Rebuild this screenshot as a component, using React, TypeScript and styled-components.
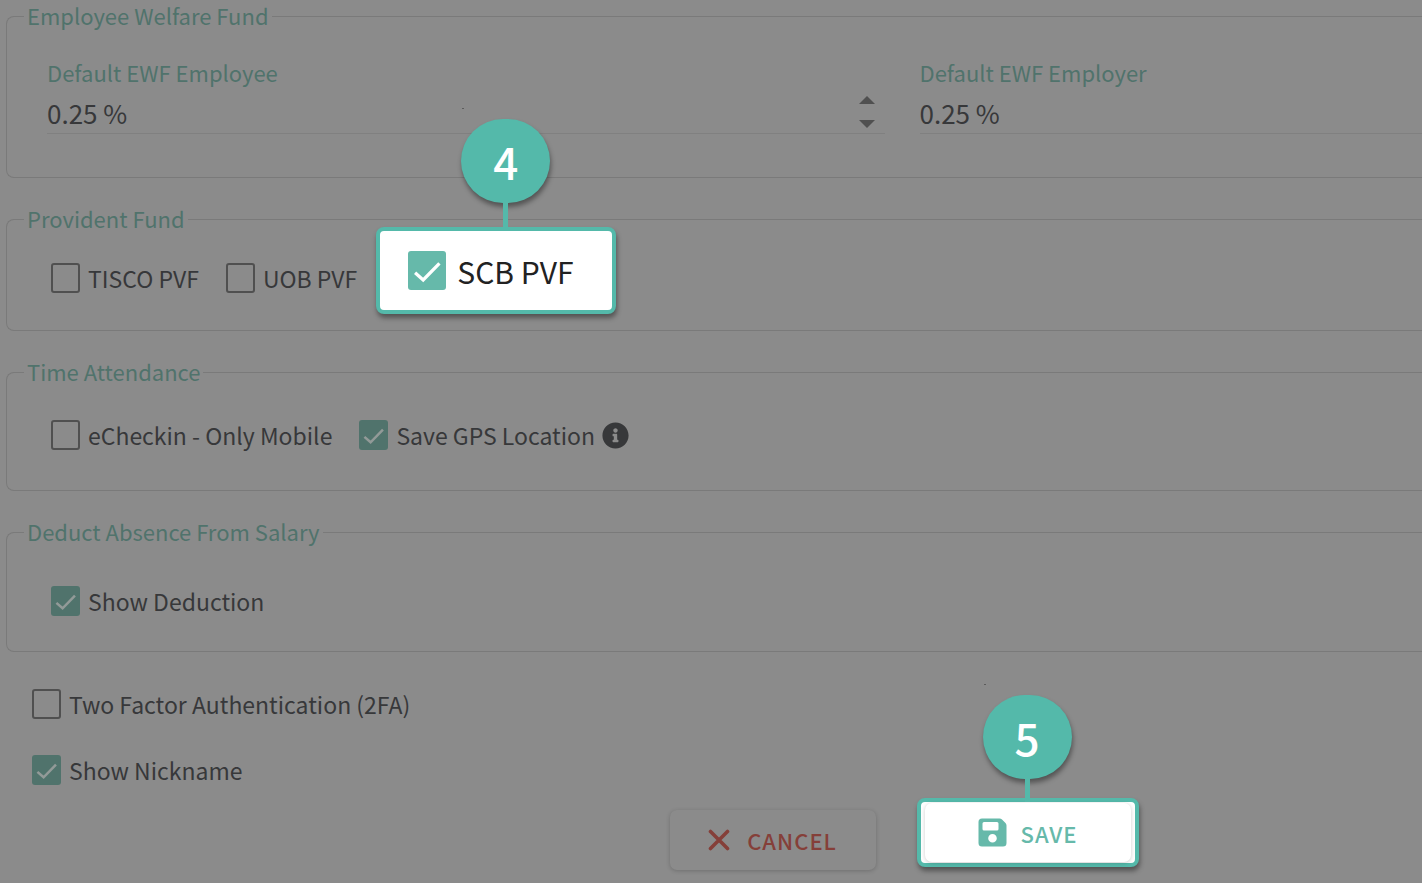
import React from "react";
import styled, { createGlobalStyle } from "styled-components";

const teal = "#54b9aa";
const dimTeal = "#50736c";
const ink = "#37383a";

const GlobalStyle = createGlobalStyle`
  * { box-sizing: border-box; }
  body {
    margin: 0;
    background: #8b8b8b;
    color: ${ink};
    font-family: "Noto Sans CJK SC", "Noto Sans", sans-serif;
    overflow-x: hidden;
  }
`;

const Form = styled.form`
  display: flex;
  flex-direction: column;
  padding: 3px 0 12px 6px;
`;

const Group = styled.fieldset<{ $top: number; $bottom: number }>`
  min-width: 0;
  margin: 0 0 28px;
  padding: ${(p) => p.$top}px 0 ${(p) => p.$bottom}px 40px;
  border: 1px solid #7a7a7a;
  border-right: 0;
  border-radius: 8px 0 0 8px;
`;

const Legend = styled.legend`
  margin-left: -23px;
  padding: 0 3px 2px;
  font-size: 22px;
  line-height: 24px;
  color: ${dimTeal};
`;

const FieldGrid = styled.div`
  display: grid;
  grid-template-columns: 5fr 3fr;
  gap: 35px;
`;

const Field = styled.div`
  display: flex;
  flex-direction: column;
  gap: 12px;
  min-width: 0;
`;

const FieldLabel = styled.label`
  font-size: 22px;
  line-height: 24px;
  color: ${dimTeal};
`;

const FieldControl = styled.div`
  display: flex;
  align-items: center;
  height: 38px;
  padding: 0 10px 5px 0;
  border-bottom: 1px solid #808080;
`;

const FieldInput = styled.input`
  flex: 1;
  min-width: 0;
  height: 32px;
  padding: 0;
  border: 0;
  outline: 0;
  background: transparent;
  color: ${ink};
  font-family: inherit;
  font-size: 26px;
`;

const Stepper = styled.div`
  display: flex;
  flex-direction: column;
  gap: 16px;
`;

const StepButton = styled.button`
  display: flex;
  padding: 0;
  border: 0;
  background: transparent;
  color: #505050;
`;

const CheckRow = styled.div`
  display: flex;
  align-items: flex-start;
  gap: 27px;
  padding-left: 4px;
`;

const LooseChecks = styled.div`
  display: flex;
  flex-direction: column;
  align-items: flex-start;
  gap: 34px;
  padding: 8px 0 0 26px;
`;

const CheckLabel = styled.label<{ $large?: boolean }>`
  display: flex;
  align-items: center;
  gap: ${(p) => (p.$large ? 11 : 8)}px;
  font-size: ${(p) => (p.$large ? 30 : 23)}px;
  line-height: 32px;
  white-space: nowrap;
  color: ${(p) => (p.$large ? "#222222" : ink)};
`;

const CheckBox = styled.span`
  display: grid;
  flex: none;
  > * { grid-area: 1 / 1; }
`;

const CheckInput = styled.input<{ $large?: boolean }>`
  appearance: none;
  width: ${(p) => (p.$large ? 38 : 29)}px;
  height: ${(p) => (p.$large ? 39 : 30)}px;
  margin: 0;
  border: 2px solid #505050;
  border-radius: 3px;
  &:checked {
    border: 0;
    background: ${(p) => (p.$large ? "#66b9aa" : dimTeal)};
  }
`;

const CheckMark = styled.svg`
  place-self: center;
  pointer-events: none;
  visibility: hidden;
  input:checked + & { visibility: visible; }
`;

const Callout = styled.div`
  position: relative;
  display: flex;
  align-items: center;
  border: 4px solid ${teal};
  border-radius: 8px;
  background: #ffffff;
  box-shadow: 1px 4px 5px rgba(0, 0, 0, 0.4);
`;

const CheckCallout = styled(Callout)`
  width: 240px;
  height: 87px;
  margin: -35px 0 -20px -8px;
  padding: 0 0 0 28px;
`;

const SaveCallout = styled(Callout)`
  width: 222px;
  height: 69px;
  padding: 0 4px;
`;

const Badge = styled.span<{ $stem: number; $shift: number }>`
  position: absolute;
  left: 50%;
  bottom: calc(100% + ${(p) => p.$stem}px);
  display: flex;
  align-items: center;
  justify-content: center;
  width: 89px;
  height: 84px;
  margin-left: ${(p) => p.$shift}px;
  border-radius: 43px;
  background: ${teal};
  box-shadow: 1px 4px 5px rgba(0, 0, 0, 0.4);
  color: #ffffff;
  font-size: 44px;
  font-weight: 500;
  line-height: 44px;
  &::before {
    content: "";
    position: absolute;
    top: -11px;
    left: 1px;
    width: 2px;
    height: 1px;
    background: #5c5c5c;
  }
  &::after {
    content: "";
    position: absolute;
    top: 100%;
    left: 42px;
    width: 5px;
    height: ${(p) => p.$stem}px;
    background: ${teal};
  }
`;

const InfoIcon = styled.svg`
  width: 27px;
  height: 27px;
  margin-left: -1px;
`;

const Actions = styled.div`
  display: flex;
  align-items: flex-start;
  justify-content: center;
  gap: 41px;
  padding: 12px 0 0 380px;
`;

const ActionButton = styled.button<{ $save?: boolean }>`
  display: flex;
  align-items: center;
  justify-content: center;
  gap: ${(p) => (p.$save ? 14 : 17)}px;
  flex: ${(p) => (p.$save ? "1" : "0 0 206px")};
  height: ${(p) => (p.$save ? 59 : 60)}px;
  margin-top: ${(p) => (p.$save ? 0 : 12)}px;
  padding: 0;
  border: 0;
  border-radius: 7px;
  background: ${(p) => (p.$save ? "#ffffff" : "#8b8b8b")};
  box-shadow: 0 1px 4px rgba(0, 0, 0, 0.2);
  color: ${(p) => (p.$save ? "#66b9aa" : "#853f39")};
  font-family: inherit;
  font-size: 22px;
  font-weight: 500;
  letter-spacing: 1px;
  svg { flex: none; }
`;

type CheckProps = {
  children: React.ReactNode;
  checked?: boolean;
  large?: boolean;
};

function Check({ children, checked, large }: CheckProps) {
  const size = large ? 38 : 29;
  return (
    <CheckLabel $large={large}>
      <CheckBox>
        <CheckInput type="checkbox" defaultChecked={checked} $large={large} />
        <CheckMark width={size} height={size} viewBox="0 0 30 30" aria-hidden="true">
          <path
            d="M5.6 16.4 L12 22 L24.8 9"
            fill="none"
            stroke={large ? "#ffffff" : "#929a98"}
            strokeWidth="2.6"
          />
        </CheckMark>
      </CheckBox>
      {children}
    </CheckLabel>
  );
}

function RateField({ id, label }: { id: string; label: string }) {
  return (
    <Field>
      <FieldLabel htmlFor={id}>{label}</FieldLabel>
      <FieldControl>
        <FieldInput id={id} type="text" defaultValue="0.25 %" />
        {id === "ewf-employee" && (
          <Stepper>
            <StepButton type="button" aria-label="Increase">
              <svg width="16" height="8" viewBox="0 0 16 8">
                <path d="M0 8 L8 0 L16 8 Z" fill="currentColor" />
              </svg>
            </StepButton>
            <StepButton type="button" aria-label="Decrease">
              <svg width="16" height="8" viewBox="0 0 16 8">
                <path d="M0 0 L8 8 L16 0 Z" fill="currentColor" />
              </svg>
            </StepButton>
          </Stepper>
        )}
      </FieldControl>
    </Field>
  );
}

export default function App() {
  return (
    <>
      <GlobalStyle />
      <Form onSubmit={(e) => e.preventDefault()}>
        <Group $top={31} $bottom={43}>
          <Legend>Employee Welfare Fund</Legend>
          <FieldGrid>
            <RateField id="ewf-employee" label="Default EWF Employee" />
            <RateField id="ewf-employer" label="Default EWF Employer" />
          </FieldGrid>
        </Group>

        <Group $top={30} $bottom={36}>
          <Legend>Provident Fund</Legend>
          <CheckRow>
            <Check>TISCO PVF</Check>
            <Check>UOB PVF</Check>
            <CheckCallout>
              <Badge $stem={28} $shift={-35}>4</Badge>
              <Check checked large>
                SCB PVF
              </Check>
            </CheckCallout>
          </CheckRow>
        </Group>

        <Group $top={34} $bottom={39}>
          <Legend>Time Attendance</Legend>
          <CheckRow>
            <Check>eCheckin - Only Mobile</Check>
            <Check checked>
              Save GPS Location
              <InfoIcon viewBox="0 0 512 512" aria-hidden="true">
                <path
                  fill={ink}
                  d="M256 8C119.043 8 8 119.083 8 256c0 136.997 111.043 248 248 248s248-111.003 248-248C504 119.083 392.957 8 256 8zm0 110c23.196 0 42 18.804 42 42s-18.804 42-42 42-42-18.804-42-42 18.804-42 42-42zm56 254c0 6.627-5.373 12-12 12h-88c-6.627 0-12-5.373-12-12v-24c0-6.627 5.373-12 12-12h12v-64h-12c-6.627 0-12-5.373-12-12v-24c0-6.627 5.373-12 12-12h64c6.627 0 12 5.373 12 12v100h12c6.627 0 12 5.373 12 12v24z"
                />
              </InfoIcon>
            </Check>
          </CheckRow>
        </Group>

        <Group $top={40} $bottom={34}>
          <Legend>Deduct Absence From Salary</Legend>
          <CheckRow>
            <Check checked>Show Deduction</Check>
          </CheckRow>
        </Group>

        <LooseChecks>
          <Check>Two Factor Authentication (2FA)</Check>
          <Check checked>Show Nickname</Check>
        </LooseChecks>

        <Actions>
          <ActionButton type="button">
            <svg width="22" height="22" viewBox="0 0 22 22" aria-hidden="true">
              <path
                d="M2.5 2.5 L19.5 19.5 M19.5 2.5 L2.5 19.5"
                stroke="currentColor"
                strokeWidth="3.6"
                strokeLinecap="round"
              />
            </svg>
            CANCEL
          </ActionButton>
          <SaveCallout>
            <Badge $stem={23} $shift={-45}>5</Badge>
            <ActionButton type="submit" $save>
              <svg width="29" height="29" viewBox="0 0 29 29" aria-hidden="true">
                <path
                  fill="currentColor"
                  fillRule="evenodd"
                  d="M4 0.500 H21.500 Q23 0.500 24 1.500 L27.500 5 Q28.500 6 28.500 7.500 V25 Q28.500 28.500 25 28.500 H4 Q0.500 28.500 0.500 25 V4 Q0.500 0.500 4 0.500 Z M6 4 Q4.500 4 4.500 5.500 V11 Q4.500 12.500 6 12.500 H19 Q20.500 12.500 20.500 11 V5.500 Q20.500 4 19 4 Z M14.500 16 A4.300 4.300 0 1 0 14.500 24.600 A4.300 4.300 0 1 0 14.500 16 Z"
                />
              </svg>
              SAVE
            </ActionButton>
          </SaveCallout>
        </Actions>
      </Form>
    </>
  );
}
